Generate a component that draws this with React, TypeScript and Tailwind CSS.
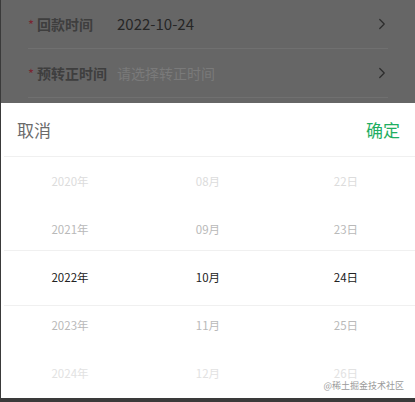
import { ChevronRight } from 'lucide-react';

// Sélecteur de date (popup bas) au-dessus d'un formulaire assombri.

const years = ['2020年', '2021年', '2022年', '2023年', '2024年'];
const months = ['08月', '09月', '10月', '11月', '12月'];
const days = ['22日', '23日', '24日', '25日', '26日'];

// opacité décroissante en s'éloignant de la ligne sélectionnée
const tone = ['text-[#dcdcdc]', 'text-[#b9b9b9]', 'text-[#222]', 'text-[#b9b9b9]', 'text-[#e2e2e2]'];

function Column({ items }: { items: string[] }) {
  return (
    <div className="flex flex-1 flex-col">
      {items.map((item, i) => (
        <div key={item} className={`flex h-12 items-center justify-center text-[11.5px] ${tone[i]}`}>
          {item}
        </div>
      ))}
    </div>
  );
}

function FormRow({ label, value, placeholder }: { label: string; value?: string; placeholder?: string }) {
  return (
    <div className="flex h-[49px] items-center border-b border-[#707070]">
      <span className="w-[9px] text-[13px] leading-none text-[#7a2632]">*</span>
      <span className="w-[80px] text-[14px] font-bold text-[#3e3e3e]">{label}</span>
      {value ? (
        <span className="flex-1 text-[15px] text-[#262626]">{value}</span>
      ) : (
        <span className="flex-1 text-[14px] text-[#7a7a7a]">{placeholder}</span>
      )}
      <ChevronRight size={18} strokeWidth={1.6} className="-mr-[3px] text-[#2c2c2c]" />
    </div>
  );
}

export default function App() {
  return (
    <div
      className="flex h-[402px] w-[415px] flex-col overflow-hidden border-b-4 border-l border-[#3a3a3a] bg-[#666]"
      style={{ fontFamily: '"Noto Sans CJK SC", "Noto Sans", sans-serif' }}
    >
      <div className="px-[27px]">
        <FormRow label="回款时间" value="2022-10-24" />
        <FormRow label="预转正时间" placeholder="请选择转正时间" />
      </div>

      <div className="relative mt-auto h-[295px] bg-white">
        <div className="ml-[3px] flex h-[54px] items-center justify-between border-b border-[#f0f0f0] pl-[13px] pr-[15px] text-[17px]">
          <span className="text-[#6b6b6b]">取消</span>
          <span className="text-[#1fae62]">确定</span>
        </div>
        <div className="mt-[1px] flex">
          <Column items={years} />
          <Column items={months} />
          <Column items={days} />
        </div>
        <div className="pointer-events-none absolute left-[3px] right-0 top-[147px] h-[56px] border-y border-[#f0f0f0]" />
        <span
          className="absolute bottom-[6px] right-[11px] text-[9px] text-[#9a9a9a]"
          style={{ textShadow: '0 0 2px #fff' }}
        >
          @稀土掘金技术社区
        </span>
      </div>
    </div>
  );
}
